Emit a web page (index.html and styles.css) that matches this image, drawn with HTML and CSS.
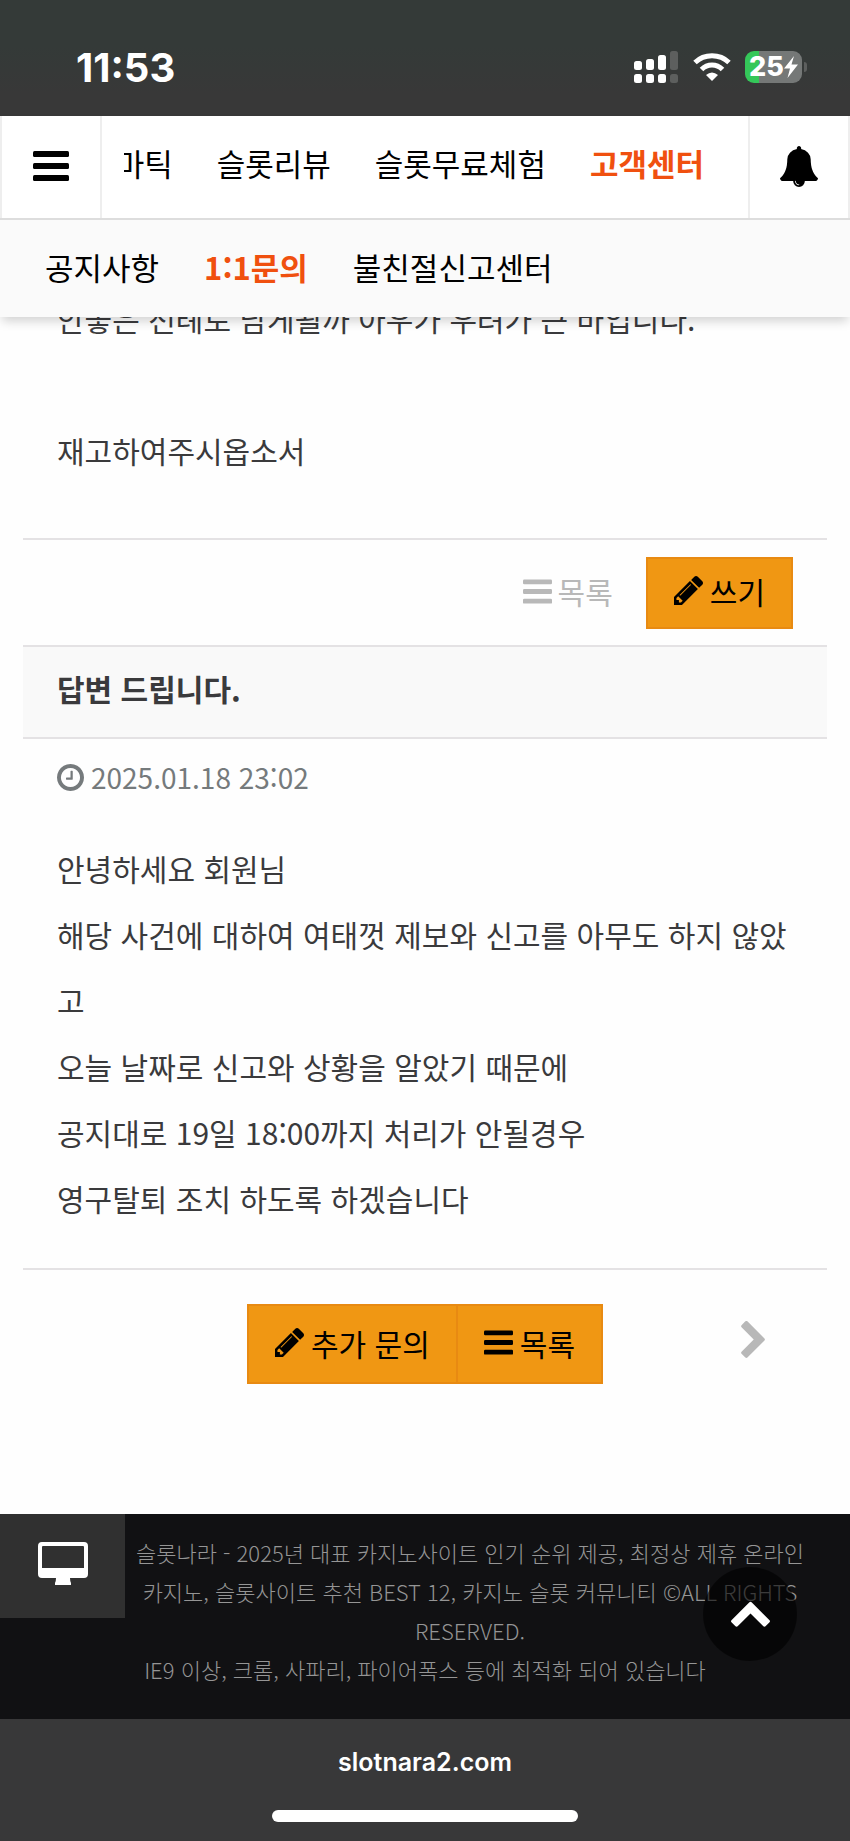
FILE: index.html
```html
<!DOCTYPE html>
<html lang="ko">
<head>
    <meta charset="UTF-8">
    <meta name="viewport" content="width=device-width, initial-scale=1.0">
    <title>1:1문의 - 슬롯나라</title>
    <link rel="stylesheet" href="styles.css">
</head>
<body>
    <!-- shared icons -->
    <svg class="sprite" aria-hidden="true">
        <symbol id="bars" viewBox="0 0 36 30">
            <rect width="36" height="6" rx="1.5"/>
            <rect y="12" width="36" height="6" rx="1.5"/>
            <rect y="24" width="36" height="6" rx="1.5"/>
        </symbol>
        <symbol id="pencil" viewBox="128 149 1515 1515">
            <path d="M491 1536l91-91-235-235-91 91v107h128v128h107zm523-928q0-22-22-22-10 0-17 7l-542 542q-7 7-7 17 0 22 22 22 10 0 17-7l542-542q7-7 7-17zm-54-192l416 416-832 832h-416v-416zm683 96q0 53-37 90l-166 166-416-416 166-165q36-38 90-38 53 0 91 38l235 234q37 39 37 91z"/>
        </symbol>
    </svg>

    <div class="status-bar">
        <span class="time">11:53</span>
        <div class="status-icons">
            <svg width="45" height="32" viewBox="0 0 45 32" fill="#fff" aria-hidden="true">
                <rect y="10" width="8" height="9" rx="2.5"/>
                <rect x="12" y="8" width="8" height="11" rx="2.5"/>
                <rect x="24" y="4" width="8" height="15" rx="2.5"/>
                <rect x="36" width="8" height="19" rx="2.5" fill="#5d5f5e"/>
                <rect y="23" width="8" height="9" rx="2.5"/>
                <rect x="12" y="23" width="8" height="9" rx="2.5"/>
                <rect x="24" y="23" width="8" height="9" rx="2.5"/>
                <rect x="36" y="23" width="8" height="9" rx="2.5" fill="#5d5f5e"/>
            </svg>
            <svg width="38" height="28" viewBox="0 0 38 28" aria-hidden="true">
                <path d="M2 9.500Q9 2.800 19 2.800T36 9.500" fill="none" stroke="#fff" stroke-width="5"/>
                <path d="M8.500 16.500Q13 12 19 12T29.500 16.500" fill="none" stroke="#fff" stroke-width="5"/>
                <path d="M13 22q6-5 12 0l-6 6z" fill="#fff"/>
            </svg>
            <div class="battery">
                <span>25</span>
                <svg width="14" height="22" viewBox="0 0 14 22" fill="#fff" aria-hidden="true"><path d="M10 0L0 12.500h6L3.500 22 14 8.500H7.500z"/></svg>
            </div>
        </div>
    </div>

    <header class="header">
        <div class="top-nav">
            <button class="menu-btn" type="button" aria-label="메뉴">
                <svg class="icon-menu"><use href="#bars"/></svg>
            </button>
            <nav class="nav-list">
                <a href="#">프라그마틱</a>
                <a href="#">슬롯리뷰</a>
                <a href="#">슬롯무료체험</a>
                <a href="#" class="on">고객센터</a>
            </nav>
            <button class="bell-btn" type="button" aria-label="알림">
                <svg width="38" height="41" viewBox="64 0 1664 1792"><path d="M912 1696q0-16-16-16-59 0-101.500-42.500t-42.500-101.500q0-16-16-16t-16 16q0 73 51.500 124.500t124.500 51.500q16 0 16-16zm816-288q0 52-38 90t-90 38h-448q0 106-75 181t-181 75-181-75-75-181h-448q-52 0-90-38t-38-90q50-42 91-88t85-119.500 74.500-158.500 50-206 19.500-260q0-152 117-282.500t307-158.500q-8-19-8-39 0-40 28-68t68-28 68 28 28 68q0 20-8 39 190 28 307 158.500t117 282.500q0 139 19.500 260t50 206 74.500 158.500 85 119.500 91 88z"/></svg>
            </button>
        </div>
        <nav class="sub-nav">
            <a href="#">공지사항</a>
            <a href="#" class="on">1:1문의</a>
            <a href="#">불친절신고센터</a>
        </nav>
    </header>

    <main class="content">
        <div class="question">
            안좋은 선례로 남게될까 아우가 우려가 큰 바입니다.<br>
            <br>
            재고하여주시옵소서
        </div>

        <div class="toolbar">
            <a href="#" class="list-link"><svg class="icon-bars"><use href="#bars"/></svg>목록</a>
            <button class="btn" type="button"><svg class="icon-pencil"><use href="#pencil"/></svg>쓰기</button>
        </div>

        <article class="answer">
            <h2>답변 드립니다.</h2>
            <div class="date">
                <svg width="27" height="27" viewBox="128 128 1536 1536" aria-hidden="true"><path d="M1024 544v448q0 14-9 23t-23 9h-320q-14 0-23-9t-9-23v-64q0-14 9-23t23-9h224v-352q0-14 9-23t23-9h64q14 0 23 9t9 23zm416 352q0-148-73-273t-198-198-273-73-273 73-198 198-73 273 73 273 198 198 273 73 273-73 198-198 73-273zm224 0q0 209-103 385.500t-279.500 279.500-385.500 103-385.500-103-279.500-279.500-103-385.500 103-385.500 279.500-279.500 385.500-103 385.500 103 279.500 279.500 103 385.500z"/></svg>
                <time datetime="2025-01-18T23:02">2025.01.18 23:02</time>
            </div>
            <div class="answer-text">
                안녕하세요 회원님<br>
                해당 사건에 대하여 여태껏 제보와 신고를 아무도 하지 않았고<br>
                오늘 날짜로 신고와 상황을 알았기 때문에<br>
                공지대로 19일 18:00까지 처리가 안될경우<br>
                영구탈퇴 조치 하도록 하겠습니다
            </div>
        </article>

        <div class="actions">
            <div class="btn-group">
                <button class="btn" type="button"><svg class="icon-pencil"><use href="#pencil"/></svg>추가 문의</button>
                <button class="btn" type="button"><svg class="icon-bars"><use href="#bars"/></svg>목록</button>
            </div>
            <a href="#" class="next" aria-label="다음글">
                <svg width="24" height="37" viewBox="346 29 1036 1609"><path d="M1363 877l-742 742q-19 19-45 19t-45-19l-166-166q-19-19-19-45t19-45l531-531-531-531q-19-19-19-45t19-45l166-166q19-19 45-19t45 19l742 742q19 19 19 45t-19 45z"/></svg>
            </a>
        </div>
    </main>

    <footer class="footer">
        <a href="#" class="pc-link" aria-label="PC 버전">
            <svg width="50" height="43" viewBox="0 0 50 43"><path fill-rule="evenodd" d="M4 0h42q4 0 4 4v28q0 4-4 4H32q0 3 1 5v2H17v-2q1-2 1-5H4q-4 0-4-4V4q0-4 4-4zm1 4q-1 0-1 1v21h42V5q0-1-1-1z"/></svg>
        </a>
        <div class="copy">
            슬롯나라 - 2025년 대표 카지노사이트 인기 순위 제공, 최정상 제휴 온라인 카지노, 슬롯사이트 추천 BEST 12, 카지노 슬롯 커뮤니티 ©ALL RIGHTS RESERVED.<br>
            IE9 이상, 크롬, 사파리, 파이어폭스 등에 최적화 되어 있습니다
        </div>
        <button class="go-top" type="button" aria-label="맨 위로">
            <svg width="39" height="26" viewBox="90 455 1612 1060"><path d="M1683 1331l-166 165q-19 19-45 19t-45-19l-531-531-531 531q-19 19-45 19t-45-19l-166-165q-19-19-19-45.500t19-45.500l742-741q19-19 45-19t45 19l742 741q19 19 19 45.500t-19 45.500z"/></svg>
        </button>
    </footer>

    <div class="browser-bar">
        <span>slotnara2.com</span>
        <div class="home-bar"></div>
    </div>
</body>
</html>
```
FILE: styles.css
```css
* {
    box-sizing: border-box;
}
body {
    margin: 0;
    font-family: "Noto Sans CJK KR", sans-serif;
    font-size: 30px;
    color: #3a3a3c;
    background-color: #fefefe;
}
a {
    color: #000;
    text-decoration: none;
}
button {
    font: inherit;
    color: #000;
    border: 0;
    padding: 0;
    background: none;
    cursor: pointer;
}
svg {
    flex-shrink: 0;
    fill: currentColor;
}
.sprite {
    display: none;
}

/* phone status bar */
.status-bar {
    display: flex;
    justify-content: space-between;
    align-items: center;
    height: 116px;
    padding: 18px 43px 0 76px;
    color: #fff;
    background: linear-gradient(#343a38 40%, #383838 80%);
}
.time {
    font-family: Inter, sans-serif;
    font-size: 40px;
    font-weight: 700;
}
.status-icons {
    display: flex;
    align-items: center;
    gap: 14px;
}
.battery {
    position: relative;
    display: flex;
    align-items: center;
    justify-content: center;
    width: 57px;
    height: 32px;
    margin-right: 5px;
    border-radius: 9px;
    font-family: Inter, sans-serif;
    font-size: 27px;
    font-weight: 800;
    line-height: 32px;
    background: linear-gradient(90deg, #34c759 25%, #757877 25%);
}
.battery::after {
    content: "";
    position: absolute;
    right: -5px;
    top: 11px;
    width: 3px;
    height: 10px;
    border-radius: 0 3px 3px 0;
    background-color: #5d5f5e;
}

/* header */
.header {
    position: relative;
    z-index: 1;
    font-size: 31px;
    box-shadow: 0 6px 10px -2px rgba(0, 0, 0, 0.18);
}
.top-nav {
    display: flex;
    height: 104px;
    border-bottom: 2px solid #ddd;
    background-color: #fff;
}
.menu-btn, .bell-btn {
    display: flex;
    align-items: center;
    justify-content: center;
    flex-shrink: 0;
    width: 102px;
    padding-bottom: 2px;
    border: solid #eee;
    border-width: 0 2px;
}
.icon-menu {
    width: 36px;
    height: 30px;
}
.nav-list {
    display: flex;
    flex: 1;
    justify-content: flex-end;
    gap: 44px;
    margin: 0 24px 0 22px;
    padding-right: 20px;
    line-height: 94px;
    white-space: nowrap;
    overflow: hidden;
}
.on {
    color: #f0500f;
    font-weight: 700;
}
.sub-nav {
    display: flex;
    gap: 45px;
    padding: 0 45px 3px;
    line-height: 94px;
    background-color: #fafafa;
}

/* board content, the first line slides under the header */
.content {
    margin: -32px 23px 0;
}
.question {
    padding: 0 34px 55px;
    line-height: 66px;
    border-bottom: 2px solid #e4e2e4;
}
.toolbar {
    display: flex;
    justify-content: flex-end;
    align-items: center;
    gap: 33px;
    padding: 17px 34px 16px;
}
.list-link {
    display: flex;
    align-items: center;
    gap: 6px;
    padding-bottom: 4px;
    color: #b8b8b8;
}
.btn {
    display: flex;
    align-items: center;
    gap: 7px;
    height: 72px;
    padding: 0 26px 5px;
    border: 2px solid #e88a12;
    background-color: #f09713;
}
.icon-bars {
    width: 29px;
    height: 25px;
}
.icon-pencil {
    width: 29px;
    height: 29px;
}
.answer {
    border-bottom: 2px solid #e4e2e4;
}
.answer h2 {
    margin: 0;
    padding: 0 34px 8px;
    font-size: 30px;
    line-height: 82px;
    border: solid #e4e2e4;
    border-width: 2px 0;
    background-color: #f9f9f9;
}
.date {
    display: flex;
    align-items: center;
    gap: 7px;
    padding: 0 34px;
    font-size: 28px;
    line-height: 77px;
    color: #757a7c;
}
.answer-text {
    padding: 19px 34px 37px;
    line-height: 66px;
}
.actions {
    display: grid;
    grid-template-columns: 1fr auto 1fr;
    align-items: center;
    padding: 34px 62px 130px;
}
.btn-group {
    grid-column: 2;
    display: flex;
}
.btn-group .btn {
    height: 80px;
    padding-bottom: 3px;
}
.btn-group .btn + .btn {
    margin-left: -2px;
}
.next {
    justify-self: end;
    display: flex;
    padding-bottom: 10px;
    color: #b8b8b8;
}

/* footer */
.footer {
    position: relative;
    height: 205px;
    background-color: #111113;
}
.pc-link {
    float: left;
    display: flex;
    align-items: center;
    justify-content: center;
    width: 125px;
    height: 104px;
    padding-bottom: 5px;
    color: #fff;
    background-color: #303030;
}
.copy {
    padding: 19px 35px;
    font-size: 22px;
    font-weight: 300;
    line-height: 39px;
    text-align: center;
    word-break: keep-all;
    color: #959595;
}
.go-top {
    position: absolute;
    right: 53px;
    top: 53px;
    display: flex;
    align-items: center;
    justify-content: center;
    width: 94px;
    height: 94px;
    border-radius: 50%;
    color: #fff;
    background-color: rgba(0, 0, 0, 0.6);
}

/* browser bottom bar */
.browser-bar {
    display: flex;
    flex-direction: column;
    align-items: center;
    gap: 30px;
    padding: 25px 0 19px;
    color: #fff;
    background-color: #383839;
    font-family: Inter, sans-serif;
    font-size: 25px;
    font-weight: 600;
    line-height: 36px;
}
.home-bar {
    width: 36%;
    height: 12px;
    border-radius: 6px;
    background-color: #fff;
}
```
